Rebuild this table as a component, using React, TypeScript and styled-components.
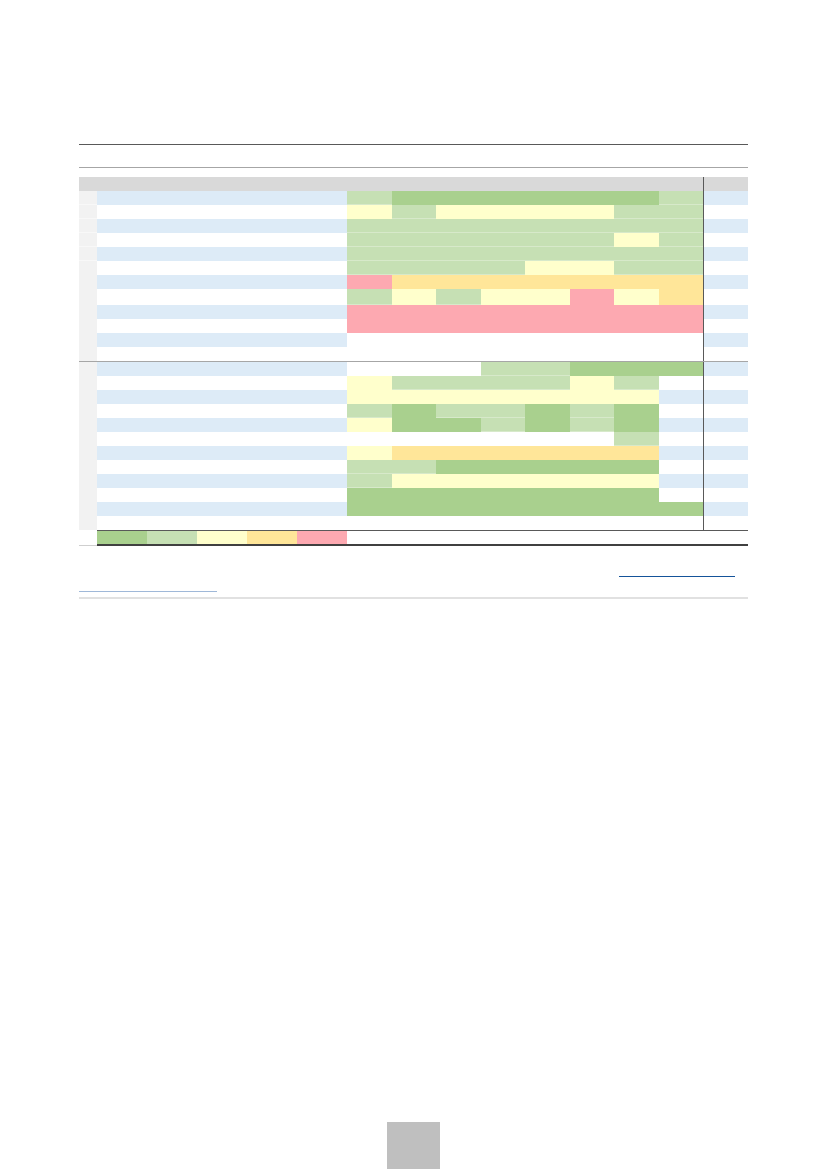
import React from 'react';
import styled, { createGlobalStyle } from 'styled-components';

const palette: Record<string, string> = {
  G: '#a9d08e',
  L: '#c6e0b4',
  Y: '#ffffcc',
  O: '#ffe699',
  P: '#fda9b1',
  '.': '#ffffff'
};

const STRIPE = '#ddebf7';

type RowData = { cells: string; tall?: boolean; split?: boolean };

const sectionOne: RowData[] = [
  { cells: 'LGGGGGGL', split: true },
  { cells: 'YLYYYYLL', split: true },
  { cells: 'LLLLLLLL', split: true },
  { cells: 'LLLLLLYL', split: true },
  { cells: 'LLLLLLLL', split: true },
  { cells: 'LLLLYYLL' },
  { cells: 'POOOOOOO' },
  { cells: 'LYLYYPYO', tall: true },
  { cells: 'PPPPPPPP' },
  { cells: 'PPPPPPPP' },
  { cells: '........' },
  { cells: '........' }
];

const sectionTwo: RowData[] = [
  { cells: '...LLGGG' },
  { cells: 'YLLLLYL-' },
  { cells: 'YYYYYYY-' },
  { cells: 'LGLLGLG-' },
  { cells: 'YGGLGLG-' },
  { cells: '......L-' },
  { cells: 'YOOOOOO-' },
  { cells: 'LLGGGGG-' },
  { cells: 'LYYYYYY-' },
  { cells: 'GGGGGGG-' },
  { cells: 'GGGGGGGG' },
  { cells: '........' }
];

const legend = ['G', 'L', 'Y', 'O', 'P'];

const GlobalStyle = createGlobalStyle`
  html, body {
    margin: 0;
    padding: 0;
    background: #ffffff;
  }
  body {
    font-family: "Liberation Sans", Arial, sans-serif;
  }
`;

const Page = styled.div`
  box-sizing: border-box;
  width: 827px;
  height: 1169px;
  padding: 144px 79px 0 79px;
  display: flex;
  flex-direction: column;
  background: #ffffff;
`;

const Rule = styled.div<{ $color: string; $gap: number; $thick?: number }>`
  margin-top: ${({ $gap }) => $gap}px;
  height: 0;
  border-top: ${({ $thick }) => $thick || 1}px solid ${({ $color }) => $color};
`;

const Table = styled.div`
  margin-top: 9px;
  display: flex;
  flex-direction: column;
`;

const columns = '18px 250px repeat(8, 44.5px) 45px';

const HeaderRow = styled.div`
  display: grid;
  grid-template-columns: 1fr 45px;
  height: 14px;
  background: #d9d9d9;
`;

const Section = styled.div<{ $divided?: boolean }>`
  display: flex;
  flex-direction: column;
  border-top: ${({ $divided }) => ($divided ? '1px solid #a6a6a6' : 'none')};
`;

const Row = styled.div<{ $tall?: boolean }>`
  display: grid;
  grid-template-columns: ${columns};
  height: ${({ $tall }) => ($tall ? 16 : 14)}px;
`;

const Gutter = styled.div<{ $split?: boolean }>`
  background: #f2f2f2;
  box-shadow: ${({ $split }) => ($split ? 'inset 0 -1px 0 #f8f8f8' : 'none')};
`;

const Label = styled.div<{ $striped: boolean }>`
  background: ${({ $striped }) => ($striped ? STRIPE : '#ffffff')};
`;

const Cell = styled.div<{ $fill: string; $striped: boolean }>`
  background: ${({ $fill, $striped }) =>
    $fill === '-' ? ($striped ? STRIPE : '#ffffff') : palette[$fill]};
  box-shadow: ${({ $fill }) =>
    $fill === 'L' ? 'inset 0 -1px 0 rgba(255,255,255,0.3)' : 'none'};
`;

const EndCell = styled.div<{ $striped?: boolean }>`
  border-left: 1px solid #595959;
  background: ${({ $striped }) => ($striped ? STRIPE : 'transparent')};
`;

const LegendRow = styled.div`
  display: grid;
  grid-template-columns: 18px 1fr;
`;

const LegendGap = styled.div`
  border-bottom: 1px solid #cfcfcf;
`;

const LegendBody = styled.div`
  display: flex;
  height: 13px;
  border-top: 1px solid #595959;
  border-bottom: 2px solid #404040;
`;

const Swatch = styled.div<{ $fill: string }>`
  width: 50px;
  background: ${({ $fill }) => palette[$fill]};
`;

const Notes = styled.div`
  margin-top: 15px;
  display: flex;
  flex-direction: column;
`;

const NoteLine = styled.div<{ $height: number }>`
  height: ${({ $height }) => $height}px;
  display: flex;
  align-items: flex-end;
`;

const LinkMark = styled.span<{ $offset: number; $width: number; $color: string }>`
  display: block;
  margin-left: ${({ $offset }) => $offset}px;
  width: ${({ $width }) => $width}px;
  border-bottom: 1px solid ${({ $color }) => $color};
`;

const PageNumber = styled.div`
  margin-top: auto;
  align-self: center;
  width: 53px;
  height: 47px;
  background: #bfbfbf;
`;

function TableRows({ rows }: { rows: RowData[] }) {
  return (
    <>
      {rows.map((row, i) => {
        const striped = i % 2 === 0;
        return (
          <Row key={i} $tall={row.tall}>
            <Gutter $split={row.split} />
            <Label $striped={striped} />
            {row.cells.split('').map((c, j) => (
              <Cell key={j} $fill={c} $striped={striped} />
            ))}
            <EndCell $striped={striped} />
          </Row>
        );
      })}
    </>
  );
}

export default function App() {
  return (
    <>
      <GlobalStyle />
      <Page>
        <Rule $color="#595959" $gap={0} />
        <Rule $color="#a6a6a6" $gap={22} />
        <Table>
          <HeaderRow>
            <div />
            <EndCell />
          </HeaderRow>
          <Section>
            <TableRows rows={sectionOne} />
          </Section>
          <Section $divided>
            <TableRows rows={sectionTwo} />
          </Section>
          <LegendRow>
            <LegendGap />
            <LegendBody>
              {legend.map((c) => (
                <Swatch key={c} $fill={c} />
              ))}
            </LegendBody>
          </LegendRow>
        </Table>
        <Notes>
          <NoteLine $height={16}>
            <LinkMark $offset={540} $width={116} $color="#15549a" />
          </NoteLine>
          <NoteLine $height={15}>
            <LinkMark $offset={0} $width={138} $color="#9fb8d8" />
          </NoteLine>
        </Notes>
        <Rule $color="#e1e1e1" $gap={5} $thick={2} />
        <PageNumber />
      </Page>
    </>
  );
}
